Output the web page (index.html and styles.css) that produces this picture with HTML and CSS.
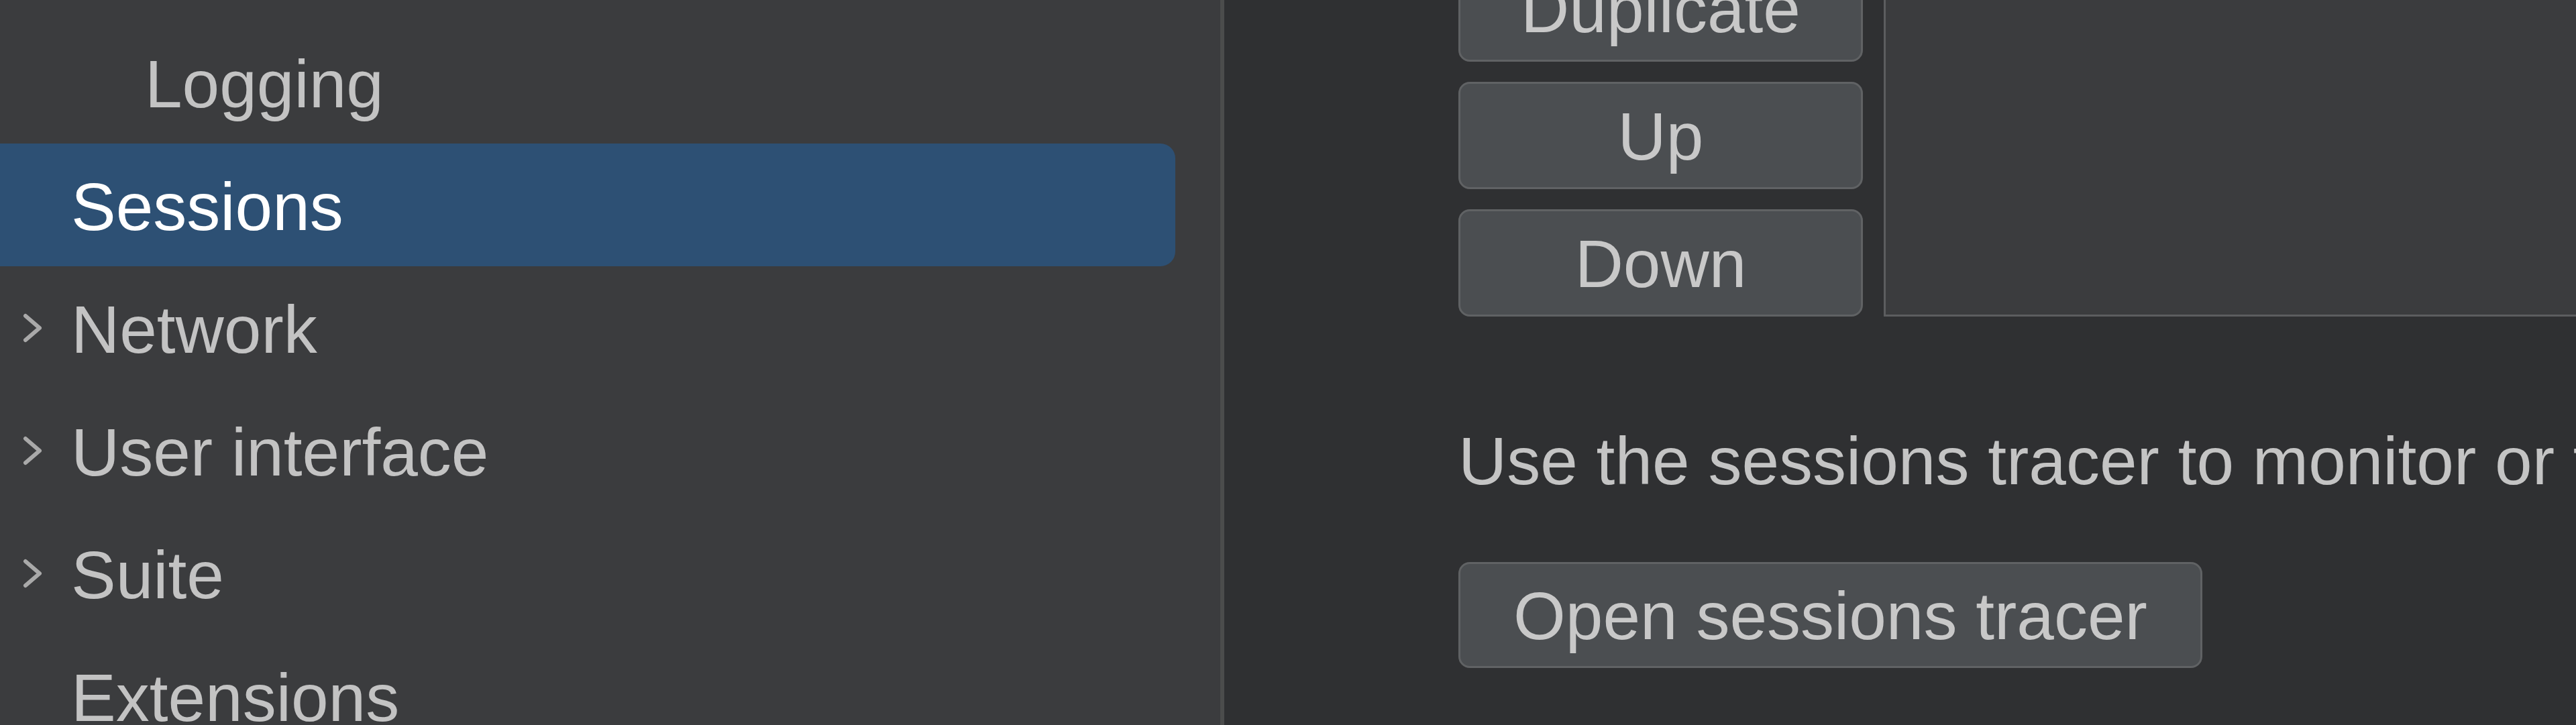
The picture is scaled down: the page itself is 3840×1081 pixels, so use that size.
FILE: index.html
```html
<!DOCTYPE html>
<html lang="en">
<head>
<meta charset="utf-8">
<title>Settings – Sessions</title>
<link rel="stylesheet" href="styles.css">
</head>
<body>
<div class="window">
  <nav class="sidebar">
    <ul class="tree">
      <li class="item level-2"><span class="gutter"></span><span class="label">Logging</span></li>
      <li class="item selected"><span class="gutter"></span><span class="label">Sessions</span></li>
      <li class="item"><span class="gutter"><svg class="chev" viewBox="0 0 30 46" width="30" height="46"><polyline points="5,5 26,23 5,41"/></svg></span><span class="label">Network</span></li>
      <li class="item"><span class="gutter"><svg class="chev" viewBox="0 0 30 46" width="30" height="46"><polyline points="5,5 26,23 5,41"/></svg></span><span class="label">User interface</span></li>
      <li class="item"><span class="gutter"><svg class="chev" viewBox="0 0 30 46" width="30" height="46"><polyline points="5,5 26,23 5,41"/></svg></span><span class="label">Suite</span></li>
      <li class="item"><span class="gutter"></span><span class="label">Extensions</span></li>
    </ul>
  </nav>
  <main class="content">
    <div class="list-row">
      <div class="btn-col">
        <button class="btn">Duplicate</button>
        <button class="btn">Up</button>
        <button class="btn">Down</button>
      </div>
      <div class="list-box"></div>
    </div>
    <p class="desc">Use the sessions tracer to monitor or troubleshoot sessions.</p>
    <button class="btn wide">Open sessions tracer</button>
  </main>
</div>
</body>
</html>
```
FILE: styles.css
```css
html, body {
  margin: 0;
  padding: 0;
  height: 100%;
  overflow: hidden;
  background: #2f3032;
}

.window {
  display: flex;
  height: 1081px;
  font-family: "Liberation Sans", Arial, Helvetica, sans-serif;
  font-size: 100px;
}

.sidebar {
  width: 1819px;
  flex-shrink: 0;
  background: #3b3c3e;
  border-right: 6px solid #4b4c4c;
  overflow: hidden;
}

.tree {
  list-style: none;
  margin: 0;
  padding: 31px 0 0 0;
}

.item {
  display: flex;
  align-items: center;
  height: 183px;
  box-sizing: border-box;
  padding-top: 5px;
  color: #c3c3c3;
  white-space: nowrap;
  margin-right: 67px;
}

.item.selected {
  background: #2d5074;
  color: #ffffff;
  border-radius: 0 22px 22px 0;
}

.gutter {
  width: 106px;
  flex-shrink: 0;
  display: flex;
  align-items: center;
  margin-top: -5px;
}

.level-2 .gutter {
  width: 216px;
}

.chev {
  margin-left: 33px;
  fill: none;
  stroke: #a9a9a9;
  stroke-width: 6;
  stroke-linecap: round;
  stroke-linejoin: round;
}

.content {
  flex: 1;
  min-width: 0;
  overflow: hidden;
  padding-left: 349px;
  background: #2f3032;
}

.list-row {
  display: flex;
  gap: 31px;
  margin-top: -68px;
}

.btn-col {
  display: flex;
  flex-direction: column;
  gap: 30px;
  width: 603px;
  flex-shrink: 0;
}

.btn {
  display: flex;
  align-items: center;
  justify-content: center;
  box-sizing: border-box;
  height: 160px;
  padding: 3px 0 0 0;
  margin: 0;
  background: #4b4e51;
  border: 3px solid #606264;
  border-radius: 17px;
  color: #c8c8c8;
  font-family: "Liberation Sans", Arial, Helvetica, sans-serif;
  font-size: 100px;
  line-height: normal;
  white-space: nowrap;
}

.list-box {
  width: 1600px;
  flex-shrink: 0;
  background: #3b3c3e;
  border: 3px solid #5c5d5f;
  box-sizing: border-box;
}

.desc {
  margin: 155px 0 0 0;
  line-height: 120px;
  color: #c4c4c4;
  white-space: nowrap;
}

.btn.wide {
  margin-top: 91px;
  height: 158px;
  padding: 3px 79px 0 79px;
}
```
